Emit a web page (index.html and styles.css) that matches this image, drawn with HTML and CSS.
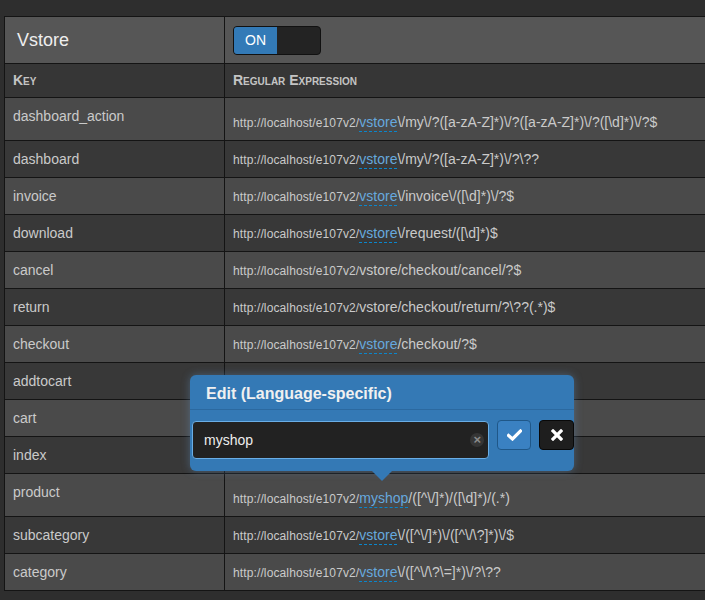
FILE: index.html
```html
<!DOCTYPE html>
<html>
<head>
<meta charset="utf-8">
<link rel="stylesheet" href="styles.css">
</head>
<body>
<div class="page">
  <table class="urls">
    <colgroup><col class="c-key"><col class="c-re"></colgroup>
    <thead>
      <tr class="plugin-row">
        <th class="plugin-name">Vstore</th>
        <th class="plugin-switch"><div class="switch"><span class="on">ON</span><span class="off"></span></div></th>
      </tr>
      <tr class="head-row">
        <th>Key</th>
        <th>Regular Expression</th>
      </tr>
    </thead>
    <tbody>
      <tr><td>dashboard_action</td><td class="re low"><small>http://localhost/e107v2/</small><a class="editable">vstore</a>\/my\/?([a-zA-Z]*)\/?([a-zA-Z]*)\/?([\d]*)\/?$</td></tr>
      <tr><td>dashboard</td><td class="re"><small>http://localhost/e107v2/</small><a class="editable">vstore</a>\/my\/?([a-zA-Z]*)\/?\??</td></tr>
      <tr><td>invoice</td><td class="re"><small>http://localhost/e107v2/</small><a class="editable">vstore</a>\/invoice\/([\d]*)\/?$</td></tr>
      <tr><td>download</td><td class="re"><small>http://localhost/e107v2/</small><a class="editable">vstore</a>\/request/([\d]*)$</td></tr>
      <tr><td>cancel</td><td class="re"><small>http://localhost/e107v2/</small>vstore/checkout/cancel/?$</td></tr>
      <tr><td>return</td><td class="re"><small>http://localhost/e107v2/</small>vstore/checkout/return/?\??(.*)$</td></tr>
      <tr><td>checkout</td><td class="re"><small>http://localhost/e107v2/</small><a class="editable">vstore</a>/checkout/?$</td></tr>
      <tr><td>addtocart</td><td class="re"></td></tr>
      <tr><td>cart</td><td class="re"></td></tr>
      <tr><td>index</td><td class="re"></td></tr>
      <tr><td>product</td><td class="re low"><small>http://localhost/e107v2/</small><a class="editable">myshop</a>/([^\/]*)/([\d]*)/(.*)</td></tr>
      <tr><td>subcategory</td><td class="re"><small>http://localhost/e107v2/</small><a class="editable">vstore</a>\/([^\/]*)\/([^\/\?]*)\/$</td></tr>
      <tr><td>category</td><td class="re"><small>http://localhost/e107v2/</small><a class="editable">vstore</a>\/([^\/\?\=]*)\/?\??</td></tr>
    </tbody>
  </table>

  <div class="popover">
    <h3 class="popover-title">Edit (Language-specific)</h3>
    <div class="popover-content">
      <div class="editor">
        <input class="editor-input" type="text" value="myshop">
        <span class="clear">&times;</span>
      </div>
      <button class="btn btn-ok" type="button">
        <svg width="15" height="12" viewBox="0 0 15 12"><path d="M1.5 6.5 L5.5 10 L13.5 2" fill="none" stroke="#fff" stroke-width="3.2" stroke-linecap="square"/></svg>
      </button>
      <button class="btn btn-cancel" type="button">
        <svg width="12" height="12" viewBox="0 0 12 12"><path d="M2 2 L10 10 M10 2 L2 10" fill="none" stroke="#fff" stroke-width="3.2" stroke-linecap="square"/></svg>
      </button>
    </div>
  </div>
</div>
</body>
</html>
```

FILE: styles.css
```css
html, body {
  margin: 0;
  background: #2e2e2e;
  font-family: "Liberation Sans", Arial, sans-serif;
  overflow: hidden;
}

.page {
  position: relative;
  padding: 16px 0 0 4px;
}

.urls {
  border-collapse: collapse;
  table-layout: fixed;
  width: 702px;
}

.c-key { width: 220px; }

.urls th,
.urls td {
  border: 1px solid #141414;
  padding: 8px;
  line-height: 20px;
  height: 20px;
  box-sizing: content-box;
  vertical-align: top;
  text-align: left;
  white-space: nowrap;
}

.plugin-row th {
  background: #565656;
  height: 30px;
  vertical-align: middle;
}

.plugin-name {
  font-size: 18px;
  font-weight: normal;
  color: #eeeeee;
  padding-left: 12px !important;
}

.switch {
  display: flex;
  width: 88px;
  height: 29px;
  box-sizing: border-box;
  border: 1px solid #111;
  border-radius: 4px;
  overflow: hidden;
  background: #232323;
}

.switch .on {
  width: 43px;
  background: #337ab7;
  color: #fff;
  font-size: 14px;
  font-weight: normal;
  display: flex;
  align-items: center;
  justify-content: center;
}

.head-row th {
  background: #363636;
  padding: 6px 8px 7px;
  font-size: 14px;
  font-weight: bold;
  font-variant: small-caps;
  color: #c4c4c4;
}

.urls tbody tr:nth-child(odd) td { background: #4a4a4a; }
.urls tbody tr:nth-child(even) td { background: #383838; }

.urls td {
  font-size: 14px;
  color: #cacaca;
}

.re small {
  font-size: 12px;
  line-height: 1;
  letter-spacing: 0.12px;
}

.re.low {
  padding-top: 14px;
  padding-bottom: 8px;
}

.urls tr:has(.low) td:first-child { height: 26px; }

.editable {
  color: #66a8de;
  border-bottom: 1px dashed #0a86cc;
  line-height: 1;
  padding-bottom: 1px;
}

.popover {
  position: absolute;
  left: 190px;
  top: 375px;
  width: 384px;
  height: 96px;
  box-sizing: border-box;
  background: #3479b5;
  border-radius: 6px;
  box-shadow: 0 0 8px rgba(110, 170, 230, 0.35);
}

.popover::after {
  content: "";
  position: absolute;
  left: 182px;
  bottom: -10px;
  border-left: 10px solid transparent;
  border-right: 10px solid transparent;
  border-top: 10px solid #3479b5;
}

.popover-title {
  margin: 0;
  height: 34px;
  padding: 0 16px;
  line-height: 37px;
  font-size: 16px;
  font-weight: bold;
  color: #f0f0f0;
  border-bottom: 1px solid #2b69a0;
}

.popover-content {
  display: flex;
  align-items: flex-start;
  gap: 8px;
  padding: 10px 0 0 2px;
}

.editor {
  display: flex;
  align-items: center;
  width: 298px;
  height: 38px;
  box-sizing: border-box;
  margin-top: 1px;
  padding: 0 4px 0 11px;
  background: #222;
  border: 1px solid #6aaee6;
  border-radius: 4px;
}

.editor-input {
  flex: 1;
  min-width: 0;
  border: none;
  outline: none;
  padding: 0;
  background: transparent;
  color: #eeeeee;
  font-family: "Liberation Sans", Arial, sans-serif;
  font-size: 14px;
}

.clear {
  width: 14px;
  height: 14px;
  border-radius: 50%;
  background: #353535;
  color: #8a8a8a;
  font-size: 13px;
  font-weight: bold;
  line-height: 14px;
  text-align: center;
}

.btn {
  width: 34px;
  height: 30px;
  box-sizing: border-box;
  padding: 0;
  border-radius: 4px;
  display: flex;
  align-items: center;
  justify-content: center;
}

.btn-ok {
  background: #3a81c2;
  border: 1px solid #1f5788;
}

.btn-cancel {
  width: 35px;
  background: #1e1e1e;
  border: 1px solid #080808;
}
```
